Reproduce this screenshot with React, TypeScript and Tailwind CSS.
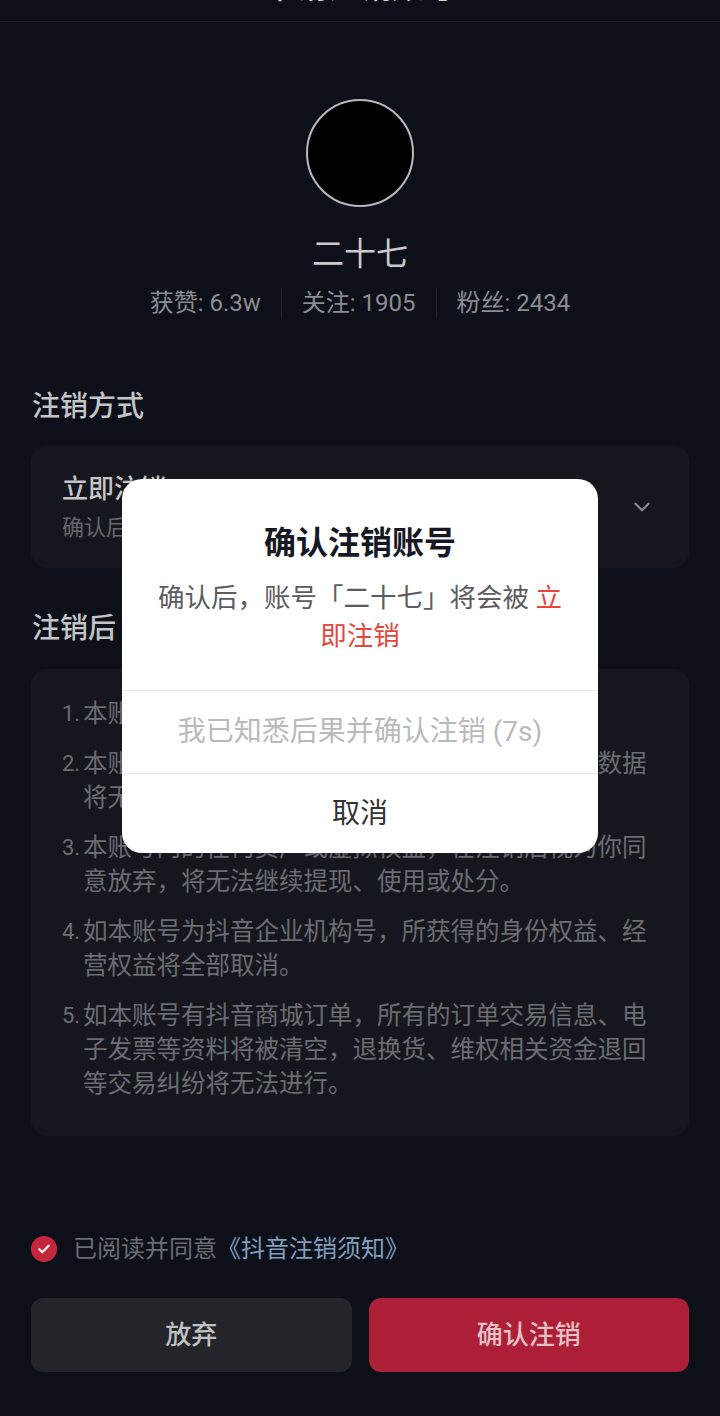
import { ChevronDown, ChevronLeft } from "lucide-react";

const rules: { no: string; text: string }[] = [
  { no: "1.", text: "本账号将被永久注销，无法登录。" },
  { no: "2.", text: "本账号的所有内容、信息、记录、关注及粉丝等数据将无法找回，请提前做好备份。" },
  { no: "3.", text: "本账号内的任何资产或虚拟权益，在注销后视为你同意放弃，将无法继续提现、使用或处分。" },
  { no: "4.", text: "如本账号为抖音企业机构号，所获得的身份权益、经营权益将全部取消。" },
  { no: "5.", text: "如本账号有抖音商城订单，所有的订单交易信息、电子发票等资料将被清空，退换货、维权相关资金退回等交易纠纷将无法进行。" },
];

function Stat({ label, value }: { label: string; value: string }) {
  return (
    <span className="px-[20px] text-[24px] leading-[30px] text-[#8b8c91]">
      {label}: {value}
    </span>
  );
}

function ConfirmDialog() {
  return (
    <div className="absolute inset-0 flex justify-center pt-[479px]">
      <div className="w-[476px] h-[374px] bg-white rounded-[20px] overflow-hidden flex flex-col">
        <div className="pt-[44px] pb-[35px] px-[30px] text-center">
          <h2 className="text-[32px] leading-[40px] font-semibold text-[#161823]">确认注销账号</h2>
          <p className="mt-[16px] text-[26.5px] leading-[38px] text-[#5c5c5e]">
            确认后，账号「二十七」将会被{" "}
            <span className="text-[#e4463a]">
              立<br />即注销
            </span>
          </p>
        </div>
        <button className="h-[83px] border-t border-[#ececec] text-[28px] text-[#bababa]">
          我已知悉后果并确认注销 (7s)
        </button>
        <button className="flex-1 border-t border-[#ececec] text-[28px] text-[#333333]">取消</button>
      </div>
    </div>
  );
}

export default function App() {
  return (
    <div
      className="relative min-h-[1416px] bg-[#0d1018] overflow-hidden"
      style={{ fontFamily: 'Roboto, "Noto Sans CJK SC", sans-serif' }}
    >
      {/* top bar, scrolled mostly out of view */}
      <div className="h-[22px] border-b border-[#1b1d24] overflow-hidden relative">
        <div className="-mt-[31px] h-[36px] flex items-center justify-center relative">
          <ChevronLeft className="absolute left-[30px] w-[34px] h-[34px] text-[#d0d0d2]" strokeWidth={2.5} />
          <span className="text-[32px] leading-[36px] font-medium text-[#d0d0d2]">申请注销账号</span>
        </div>
      </div>

      <div className="flex flex-col items-center">
        <div className="mt-[77px] w-[108px] h-[108px] rounded-full bg-black border-[2px] border-[#b9b9bb]" />
        <div className="mt-[27px] text-[32px] leading-[40px] text-[#c9c9cb]">二十七</div>
        <div className="mt-[14px] flex items-center">
          <Stat label="获赞" value="6.3w" />
          <span className="w-px h-[30px] bg-[#23252b]" />
          <Stat label="关注" value="1905" />
          <span className="w-px h-[30px] bg-[#23252b]" />
          <Stat label="粉丝" value="2434" />
        </div>
      </div>

      <div className="px-[31px]">
        <h3 className="mt-[71px] pl-px text-[28px] leading-[36px] font-medium text-[#c3c4c6]">注销方式</h3>
        <div className="mt-[21px] h-[122px] rounded-[16px] bg-[#16171e] pl-[31px] pr-[34px] flex items-center justify-between">
          <div>
            <div className="text-[26px] leading-[34px] font-medium text-[#c6c6c8]">立即注销</div>
            <div className="mt-[7px] text-[22px] leading-[30px] text-[#65666b]">确认后账号将被立即注销</div>
          </div>
          <ChevronDown className="w-[26px] h-[26px] text-[#8a8b90]" strokeWidth={2} />
        </div>

        <h3 className="mt-[43px] pl-px text-[28px] leading-[36px] font-medium text-[#c3c4c6]">注销后</h3>
        <div className="mt-[22px] rounded-[16px] bg-[#16171e] pl-[31px] pr-[30px] pt-[28px] pb-[35px] flex flex-col gap-[16px]">
          {rules.map((r) => (
            <div key={r.no} className="flex text-[24.5px] leading-[34px] text-[#6b6c71]">
              <span className="w-[21px] shrink-0 text-[22px]">{r.no}</span>
              <span className="flex-1">{r.text}</span>
            </div>
          ))}
        </div>

        <div className="mt-[96px] flex items-center gap-[16px] h-[34px]">
          <span className="w-[26px] h-[26px] rounded-full bg-[#c4263c] flex items-center justify-center">
            <svg viewBox="0 0 24 24" className="w-[16px] h-[16px]" fill="none" stroke="white" strokeWidth={3.2} strokeLinecap="round" strokeLinejoin="round">
              <path d="M5 12.5l4.5 4.5L19 7" />
            </svg>
          </span>
          <span className="text-[24px] leading-[34px] text-[#6b6c71]">
            已阅读并同意<span className="text-[#7f9dbf]">《抖音注销须知》</span>
          </span>
        </div>

        <div className="mt-[32px] pb-[44px] grid grid-cols-2 gap-[17px]">
          <button className="h-[74px] rounded-[12px] bg-[#24252b] text-[26px] font-medium text-[#c0c0c2]">放弃</button>
          <button className="h-[74px] rounded-[12px] bg-[#ad1f37] text-[26px] font-medium text-[#e6c1c6]">确认注销</button>
        </div>
      </div>

      <ConfirmDialog />
    </div>
  );
}
